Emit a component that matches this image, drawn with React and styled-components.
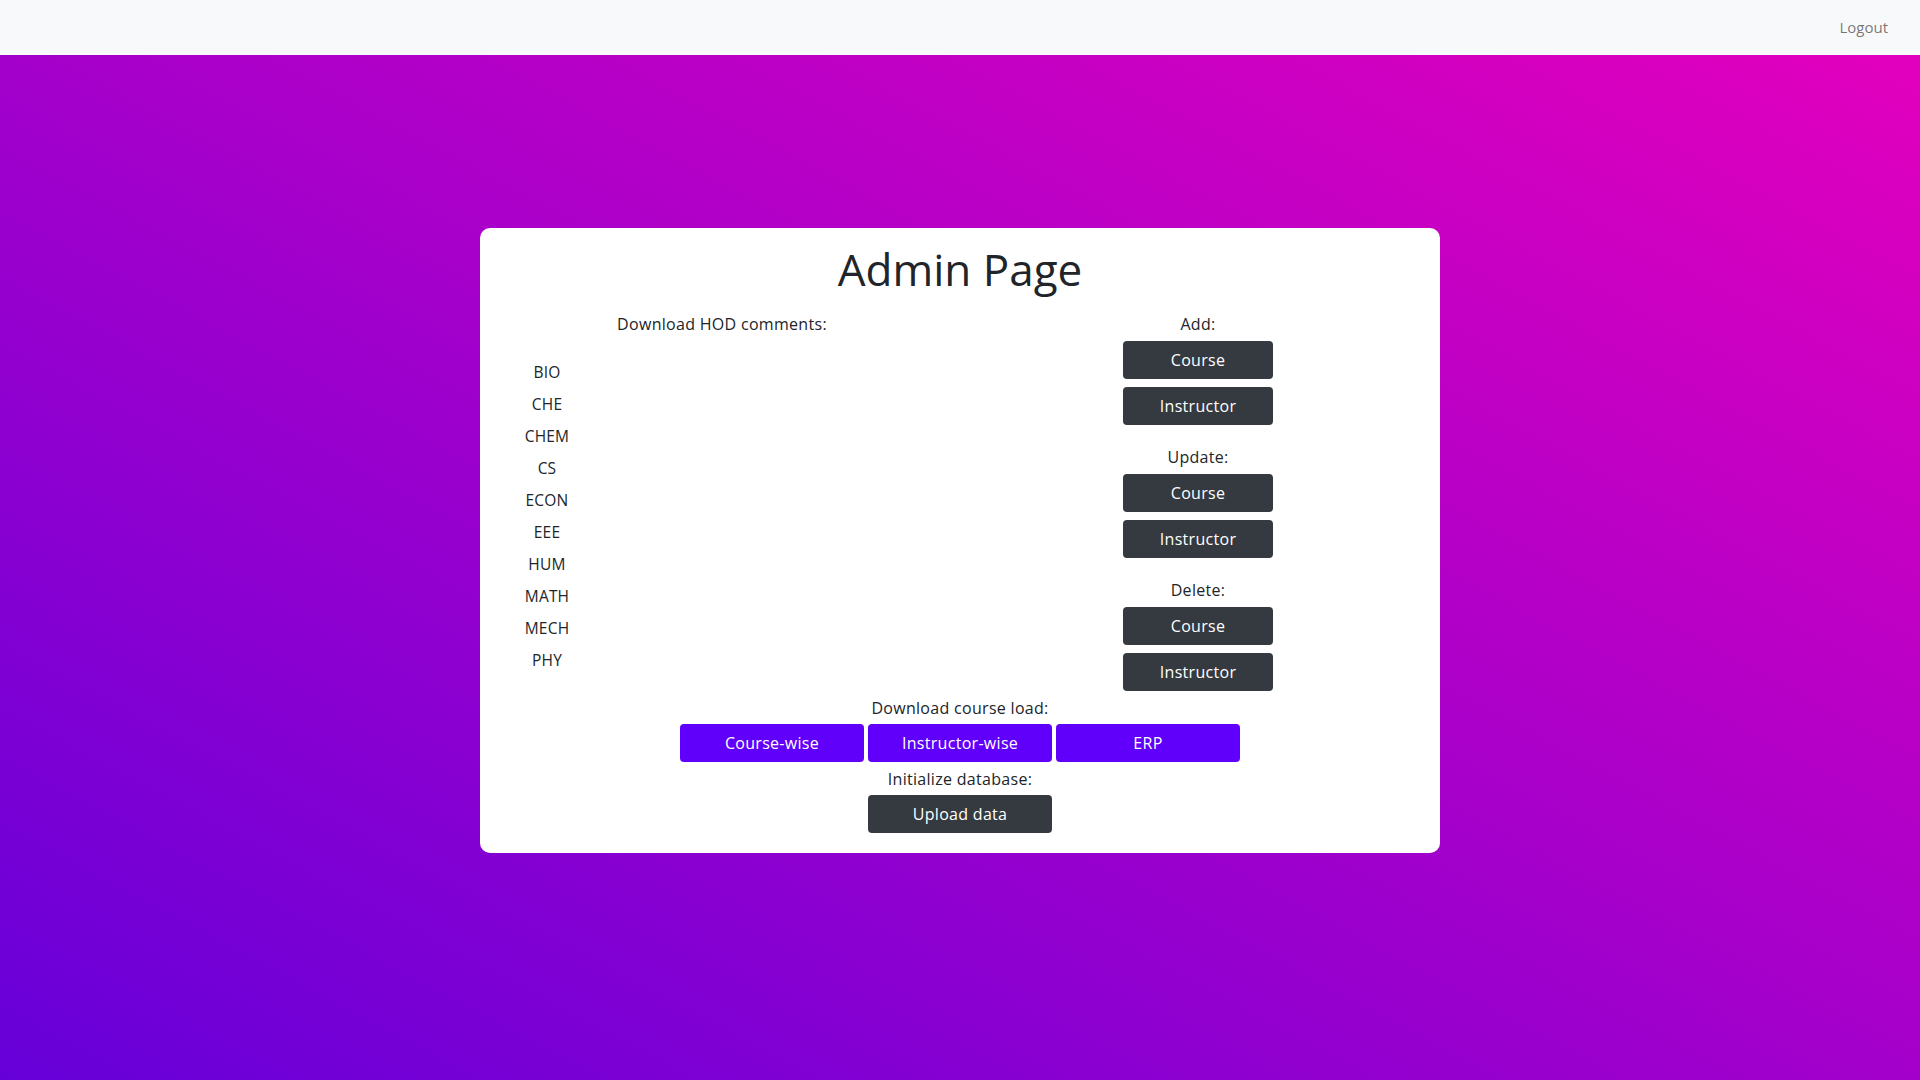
import React from 'react'
import styled, { createGlobalStyle } from 'styled-components'

const GlobalStyle = createGlobalStyle`
  html, body {
    margin: 0;
    padding: 0;
  }

  body {
    font-family: "Open Sans", "Liberation Sans", sans-serif;
    color: #212529;
  }

  * {
    box-sizing: border-box;
  }
`

const Page = styled.div`
  min-height: 100vh;
  display: flex;
  flex-direction: column;
`

const NavBar = styled.nav`
  height: 55px;
  background: #f8f9fa;
  display: flex;
  align-items: center;
  justify-content: flex-end;
  padding: 0 32px;
`

const NavLink = styled.a`
  font-size: 15px;
  line-height: 20px;
  margin-top: -2px;
  color: rgba(0, 0, 0, 0.55);
  text-decoration: none;
  cursor: pointer;
`

const Main = styled.main`
  flex: 1;
  background: linear-gradient(to top right, #6600d9, #e200bd);
  padding-top: 173px;
`

const Card = styled.div`
  width: 960px;
  margin: 0 auto;
  background: #fff;
  border-radius: 10px;
  padding: 14px 4px 20px;
`

const Title = styled.h1`
  margin: 0 0 16px;
  height: 54px;
  line-height: 54px;
  font-size: 44px;
  font-weight: 400;
  text-align: center;
`

const Columns = styled.div`
  display: grid;
  grid-template-columns: 1fr 1fr;
`

const Column = styled.div`
  display: flex;
  flex-direction: column;
  align-items: ${(p) => (p.$left ? 'stretch' : 'center')};
`

const Label = styled.div`
  font-size: 16px;
  line-height: 24px;
  letter-spacing: 0.3px;
  text-align: center;
  margin-top: ${(p) => p.$top || 0}px;
`

const DeptList = styled.ul`
  list-style: none;
  margin: 20px 0 0;
  padding: 0;
  width: 126px;
`

const DeptItem = styled.li`
  height: 32px;
  line-height: 32px;
  font-size: 15.5px;
  letter-spacing: 0.2px;
  text-align: center;
  cursor: pointer;
`

const Btn = styled.button`
  width: ${(p) => p.$width || 150}px;
  height: 38px;
  border: none;
  border-radius: 4px;
  background: ${(p) => (p.$primary ? '#6000fa' : '#343a40')};
  color: #fff;
  font-family: inherit;
  font-size: 16px;
  letter-spacing: 0.3px;
  line-height: 36px;
  cursor: pointer;
  margin-top: ${(p) => p.$top || 0}px;
`

const Bottom = styled.div`
  display: flex;
  flex-direction: column;
  align-items: center;
`

const BtnRow = styled.div`
  display: flex;
  gap: 4px;
  margin-top: 4px;
`

const depts = ['BIO', 'CHE', 'CHEM', 'CS', 'ECON', 'EEE', 'HUM', 'MATH', 'MECH', 'PHY']

const groups = ['Add:', 'Update:', 'Delete:']

const App = () => {
  return (
    <>
      <GlobalStyle />
      <Page>
        <NavBar>
          <NavLink>Logout</NavLink>
        </NavBar>
        <Main>
          <Card>
            <Title>Admin Page</Title>
            <Columns>
              <Column $left>
                <Label>Download HOD comments:</Label>
                <DeptList>
                  {depts.map((d) => (
                    <DeptItem key={d}>{d}</DeptItem>
                  ))}
                </DeptList>
              </Column>
              <Column>
                {groups.map((g, i) => (
                  <React.Fragment key={g}>
                    <Label $top={i === 0 ? 0 : 20}>{g}</Label>
                    <Btn $top={5}>Course</Btn>
                    <Btn $top={8}>Instructor</Btn>
                  </React.Fragment>
                ))}
              </Column>
            </Columns>
            <Bottom>
              <Label $top={5}>Download course load:</Label>
              <BtnRow>
                <Btn $primary $width={184}>Course-wise</Btn>
                <Btn $primary $width={184}>Instructor-wise</Btn>
                <Btn $primary $width={184}>ERP</Btn>
              </BtnRow>
              <Label $top={5}>Initialize database:</Label>
              <Btn $width={184} $top={4}>Upload data</Btn>
            </Bottom>
          </Card>
        </Main>
      </Page>
    </>
  )
}

export default App
